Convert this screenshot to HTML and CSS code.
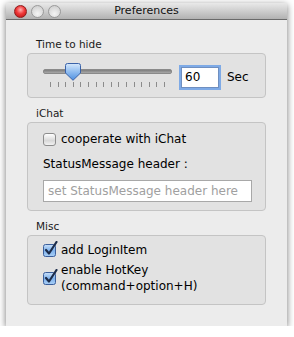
FILE: index.html
```html
<!DOCTYPE html>
<html>
<head>
<meta charset="utf-8">
<link rel="stylesheet" href="styles.css">
</head>
<body>
<div class="window">
  <div class="titlebar">
    <div class="lights">
      <span class="light red"></span>
      <span class="light"></span>
      <span class="light"></span>
    </div>
    <div class="title">Preferences</div>
    <div></div>
  </div>
  <div class="content">
    <div class="label">Time to hide</div>
    <div class="box box1">
      <div class="slider">
        <div class="track"></div>
        <div class="ticks">
          <i></i><i></i><i></i><i></i><i></i><i></i><i></i><i></i>
          <i></i><i></i><i></i><i></i><i></i><i></i><i></i><i></i>
        </div>
        <svg class="thumb" width="16" height="18" viewBox="0 0 16 18">
          <defs>
            <linearGradient id="tg" x1="0" y1="0" x2="0" y2="1">
              <stop offset="0" stop-color="#d6e8fb"/>
              <stop offset="0.5" stop-color="#8fbcf0"/>
              <stop offset="1" stop-color="#4d8fe0"/>
            </linearGradient>
          </defs>
          <path d="M2.5 0.5 H13.5 Q15.5 0.5 15.5 2.5 V10 L8 17.3 L0.5 10 V2.5 Q0.5 0.5 2.5 0.5 Z" fill="url(#tg)" stroke="#3a62a8" stroke-width="1"/>
        </svg>
      </div>
      <div class="field focus">60</div>
      <div class="sec">Sec</div>
    </div>

    <div class="label gap">iChat</div>
    <div class="box box2">
      <div class="check-row">
        <span class="checkbox"></span>
        <span class="check-text">cooperate with iChat</span>
      </div>
      <div class="plain">StatusMessage header :</div>
      <div class="field wide">set StatusMessage header here</div>
    </div>

    <div class="label gap">Misc</div>
    <div class="box box3">
      <div class="check-row">
        <svg class="checked" width="16" height="16" viewBox="0 0 16 16">
          <defs>
            <linearGradient id="cg1" x1="0" y1="0" x2="0" y2="1">
              <stop offset="0" stop-color="#c9e0f9"/>
              <stop offset="0.5" stop-color="#7fb2ec"/>
              <stop offset="1" stop-color="#a9cff6"/>
            </linearGradient>
          </defs>
          <rect x="0.5" y="3.5" width="12" height="12" rx="2" fill="url(#cg1)" stroke="#3b5f9c"/>
          <path d="M3 9 L6 12.5 L13.5 1" fill="none" stroke="#1c2c4a" stroke-width="2.2" stroke-linecap="round" stroke-linejoin="round"/>
        </svg>
        <span class="check-text">add LoginItem</span>
      </div>
      <div class="check-row two">
        <svg class="checked" width="16" height="16" viewBox="0 0 16 16">
          <rect x="0.5" y="3.5" width="12" height="12" rx="2" fill="url(#cg1)" stroke="#3b5f9c"/>
          <path d="M3 9 L6 12.5 L13.5 1" fill="none" stroke="#1c2c4a" stroke-width="2.2" stroke-linecap="round" stroke-linejoin="round"/>
        </svg>
        <span class="check-text">enable HotKey<br>(command+option+H)</span>
      </div>
    </div>
  </div>
</div>
</body>
</html>
```

FILE: styles.css
```css
html, body {
  margin: 0;
  padding: 0;
  background: #ffffff;
}
body {
  font-family: "DejaVu Sans", sans-serif;
  font-size: 12px;
  color: #000;
}
.window {
  width: 281px;
  height: 323px;
  margin: 3px 0 0 6px;
  background: #ececec;
  box-shadow: 0 2px 7px rgba(0, 0, 0, 0.55);
  display: flex;
  flex-direction: column;
}
.titlebar {
  height: 16px;
  border-bottom: 1px solid #6a6a6a;
  background: linear-gradient(#e9e9e9, #b2b2b2);
  display: grid;
  grid-template-columns: 1fr auto 1fr;
  align-items: center;
}
.lights {
  display: flex;
  gap: 4px;
  padding-left: 8px;
}
.light {
  width: 11px;
  height: 11px;
  border-radius: 50%;
  border: 1px solid #9a9a9a;
  background: radial-gradient(circle at 50% 70%, #f4f4f4, #c9c9c9);
}
.light.red {
  border-color: #8e1c1c;
  background: radial-gradient(circle at 50% 35%, #ffb0b0 0, #f0393a 45%, #b30d0e 100%);
}
.title {
  font-size: 11px;
  line-height: 14px;
  color: #111;
}
.content {
  padding: 17px 0 0 21px;
}
.label {
  font-size: 10.5px;
  line-height: 15px;
  padding-left: 9px;
  margin-bottom: 1px;
  color: #1a1a1a;
}
.label.gap {
  margin-top: 8px;
}
.box {
  width: 239px;
  box-sizing: border-box;
  border: 1px solid #c4c4c4;
  border-radius: 4px;
  background: #e2e2e2;
}
.box1 {
  height: 45px;
  display: flex;
  align-items: flex-start;
  padding-left: 15px;
}
.slider {
  position: relative;
  width: 129px;
  height: 43px;
}
.track {
  margin-top: 15px;
  border-radius: 2px;
  background: linear-gradient(#7d7d7d, #a9a9a9);
  border: 1px solid #8a8a8a;
  box-sizing: content-box;
  height: 3px;
}
.ticks {
  margin: 8px 7px 0 7px;
  height: 5px;
  display: flex;
  justify-content: space-between;
}
.ticks i {
  width: 1px;
  height: 5px;
  background: #8c8c8c;
}
.thumb {
  position: absolute;
  left: 22px;
  top: 9px;
}
.field {
  box-sizing: border-box;
  background: #fff;
  border: 1px solid #9a9a9a;
  font-size: 12px;
}
.field.focus {
  width: 38px;
  height: 21px;
  margin: 13px 0 0 9px;
  line-height: 19px;
  padding-left: 3px;
  box-shadow: 0 0 0 2px #7eaae6;
  border-color: #6f8fc0;
}
.sec {
  margin: 16px 0 0 8px;
  line-height: 15px;
}
.box2 {
  height: 89px;
  padding: 9px 0 0 15px;
}
.check-row {
  display: flex;
  align-items: center;
  line-height: 15px;
}
.checkbox {
  width: 13px;
  height: 13px;
  box-sizing: border-box;
  border: 1px solid #8d8d8d;
  border-radius: 3px;
  background: linear-gradient(#ffffff, #d8d8d8 60%, #f2f2f2);
}
.check-text {
  margin-left: 5px;
}
.plain {
  margin-top: 10px;
  line-height: 15px;
}
.field.wide {
  width: 209px;
  height: 22px;
  margin-top: 8px;
  line-height: 20px;
  padding-left: 4px;
  color: #a0a0a0;
  border-color: #a8a8a8;
  font-size: 12px;
  white-space: nowrap;
  overflow: hidden;
}
.box3 {
  height: 70px;
  padding: 7px 0 0 15px;
}
.check-row .checked {
  margin-top: -3px;
  flex: none;
}
.check-row .checked + .check-text {
  margin-left: 2px;
}
.check-row.two {
  margin-top: 4px;
  line-height: 16px;
}
```
